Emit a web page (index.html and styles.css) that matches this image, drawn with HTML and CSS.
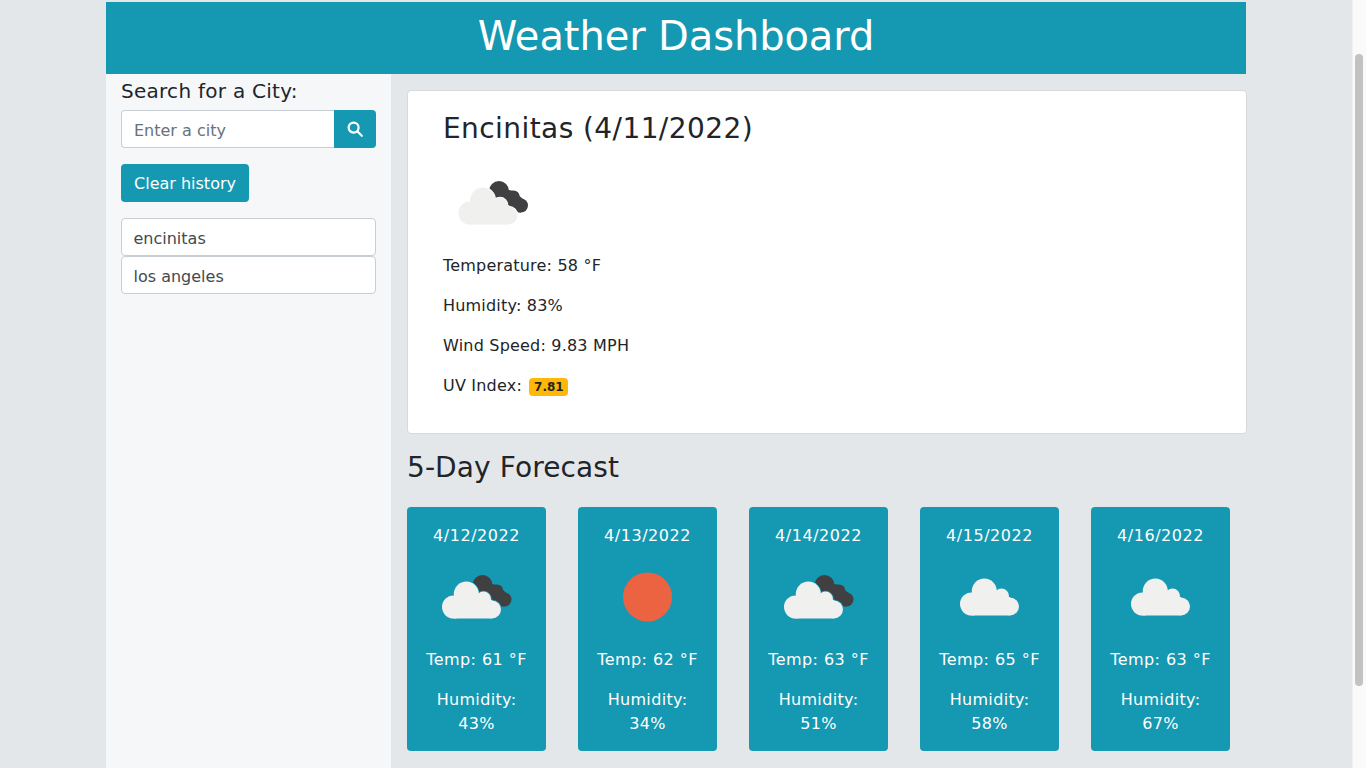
FILE: index.html
```html
<!DOCTYPE html>
<html lang="en">
<head>
<meta charset="utf-8">
<title>Weather Dashboard</title>
<link rel="stylesheet" href="styles.css">
</head>
<body>
<svg class="defs" width="0" height="0" aria-hidden="true">
  <defs>
    <g id="light-cloud">
      <circle cx="44.8" cy="44" r="12.5"/>
      <circle cx="62" cy="49" r="7.5"/>
      <circle cx="32" cy="57" r="11.5"/>
      <circle cx="70.5" cy="59.5" r="9"/>
      <rect x="32" y="50" width="38.5" height="18.5"/>
    </g>
    <g id="dark-cloud">
      <circle cx="56" cy="38" r="10"/>
      <circle cx="70.5" cy="43.7" r="6.3"/>
      <circle cx="78" cy="52.5" r="7"/>
      <polygon points="56,35 70.5,38 80,46 78,59.5 56,59.5"/>
    </g>
    <symbol id="icon-clouds" viewBox="0 0 100 100">
      <use href="#dark-cloud" class="fill-dark"/>
      <use href="#light-cloud" class="gap" transform="translate(-5 3)"/>
      <use href="#light-cloud" class="fill-light" transform="translate(-5 3)"/>
    </symbol>
    <symbol id="icon-cloud" viewBox="0 0 100 100">
      <use href="#light-cloud" class="fill-light"/>
    </symbol>
    <symbol id="icon-sun" viewBox="0 0 100 100">
      <circle cx="50" cy="50" r="24.5" class="fill-sun"/>
    </symbol>
  </defs>
</svg>
<div class="viewport">
  <div class="page">
    <div class="container">
      <header class="banner"><h1>Weather Dashboard</h1></header>
      <div class="columns">
        <aside class="sidebar">
          <h5 class="search-label">Search for a City:</h5>
          <form class="search-group">
            <input class="search-input" type="text" placeholder="Enter a city">
            <button class="search-btn" type="button" aria-label="Search">
              <svg class="search-icon" viewBox="0 0 16 16"><circle cx="6.6" cy="6.6" r="5"/><line x1="10.3" y1="10.3" x2="14.8" y2="14.8"/></svg>
            </button>
          </form>
          <button class="clear-btn" type="button">Clear history</button>
          <ul class="history">
            <li class="history-item">encinitas</li>
            <li class="history-item">los angeles</li>
          </ul>
        </aside>
        <main class="content">
          <section class="current">
            <h2 class="heading current-title">Encinitas (4/11/2022)</h2>
            <svg class="weather-icon"><use href="#icon-clouds"/></svg>
            <p class="stat">Temperature: 58 °F</p>
            <p class="stat">Humidity: 83%</p>
            <p class="stat">Wind Speed: 9.83 MPH</p>
            <p class="stat">UV Index: <span class="uv-badge">7.81</span></p>
          </section>
          <h2 class="heading forecast-title">5-Day Forecast</h2>
          <div class="forecast">
            <article class="day">
              <div class="day-date">4/12/2022</div>
              <svg class="weather-icon"><use href="#icon-clouds"/></svg>
              <p class="stat">Temp: 61 °F</p>
              <div class="day-humidity">Humidity: 43%</div>
            </article>
            <article class="day">
              <div class="day-date">4/13/2022</div>
              <svg class="weather-icon"><use href="#icon-sun"/></svg>
              <p class="stat">Temp: 62 °F</p>
              <div class="day-humidity">Humidity: 34%</div>
            </article>
            <article class="day">
              <div class="day-date">4/14/2022</div>
              <svg class="weather-icon"><use href="#icon-clouds"/></svg>
              <p class="stat">Temp: 63 °F</p>
              <div class="day-humidity">Humidity: 51%</div>
            </article>
            <article class="day">
              <div class="day-date">4/15/2022</div>
              <svg class="weather-icon"><use href="#icon-cloud"/></svg>
              <p class="stat">Temp: 65 °F</p>
              <div class="day-humidity">Humidity: 58%</div>
            </article>
            <article class="day">
              <div class="day-date">4/16/2022</div>
              <svg class="weather-icon"><use href="#icon-cloud"/></svg>
              <p class="stat">Temp: 63 °F</p>
              <div class="day-humidity">Humidity: 67%</div>
            </article>
          </div>
        </main>
      </div>
    </div>
  </div>
  <div class="scrollbar"><div class="scroll-thumb"></div></div>
</div>
</body>
</html>
```
FILE: styles.css
```css
* { box-sizing: border-box; }
html, body { margin: 0; height: 100%; overflow: hidden; }
body {
  background: #e4e7ea;
  color: #212529;
  font-family: "DejaVu Sans", Verdana, sans-serif;
  font-size: 16px;
  line-height: 24px;
}
.defs { position: absolute; }
.viewport { display: flex; height: 768px; }
.page { flex: 1; min-width: 0; overflow: hidden; padding-top: 2px; }
.container { width: 1140px; margin: 0 auto; }
.banner {
  height: 72px;
  padding-bottom: 4px;
  background: #1598b1;
  color: #fff;
  display: flex;
  align-items: center;
  justify-content: center;
}
.banner h1 { margin: 0; font-size: 40px; font-weight: 400; line-height: 48px; letter-spacing: -0.1px; }
.columns { display: flex; align-items: stretch; }
.sidebar {
  width: 285px;
  flex: none;
  height: 694px;
  background: #f6f7f9;
  padding: 5px 15px 0;
}
.search-label { margin: 0 0 7px; font-size: 20px; font-weight: 400; line-height: 24px; letter-spacing: 0.27px; }
.search-group { display: flex; height: 38px; }
.search-input {
  flex: 1;
  min-width: 0;
  border: 1px solid #c9ced4;
  border-right: 0;
  border-radius: 4px 0 0 4px;
  padding: 8px 12px 4px;
  font: inherit;
  color: #495057;
  background: #fff;
}
.search-input::placeholder { color: #68727b; opacity: 1; }
.search-btn {
  width: 42px;
  border: 0;
  padding: 0 1px 0 0;
  border-radius: 0 4px 4px 0;
  background: #1598b1;
  display: flex;
  align-items: center;
  justify-content: center;
}
.search-icon { width: 16px; height: 16px; fill: none; stroke: #fff; stroke-width: 2.2; stroke-linecap: round; }
.clear-btn {
  display: block;
  margin-top: 16px;
  width: 128px;
  height: 38px;
  padding: 2px 0 0;
  border: 0;
  border-radius: 4px;
  background: #1598b1;
  color: #fff;
  font: inherit;
}
.history { list-style: none; margin: 16px 0 0; padding: 0; }
.history-item {
  height: 38px;
  padding: 8px 11.5px 4px;
  background: #fff;
  border: 1px solid #c9ced4;
  border-radius: 4px;
  color: #43494f;
}
.content { flex: 1; min-width: 0; padding: 16px 0 0 16px; }
.current {
  width: 840px;
  height: 344px;
  padding: 21px 35px 20px;
  background: #fff;
  border: 1px solid #d7dadd;
  border-radius: 4px;
}
.heading { margin: 0 0 8px; font-size: 28px; font-weight: 400; line-height: 33.6px; }
.current-title { margin-bottom: 7px; letter-spacing: 0.42px; }
.forecast-title { margin: 17px 0 22px; letter-spacing: 0.1px; }
.weather-icon { display: block; width: 100px; height: 100px; margin-bottom: 1px; color: #fff; }
.stat { margin: 0 0 16px; letter-spacing: 0.2px; }
.uv-badge {
  display: inline-block;
  margin-left: 2px;
  padding: 3px 4.8px;
  background: #ffb806;
  border-radius: 4px;
  font-size: 12px;
  font-weight: 700;
  line-height: 12px;
  letter-spacing: 0;
  vertical-align: baseline;
}
.forecast { display: flex; gap: 32px; }
.day {
  width: 139px;
  height: 244px;
  padding: 17px 16px 16px;
  background: #1598b1;
  border-radius: 4px;
  color: #fff;
  text-align: center;
}
.day .weather-icon { margin: -0.5px auto 0.5px; color: #1598b1; }
.day .weather-icon use { transform: translateX(-0.5px); }
.day .stat { letter-spacing: 0.45px; }
.day-date { letter-spacing: 0.55px; }
.day-humidity { letter-spacing: 0.33px; }
.fill-light { fill: #f0f0ef; }
.fill-dark { fill: #404042; }
.fill-sun { fill: #ec6342; }
.gap { fill: currentColor; stroke: currentColor; stroke-width: 1.5; }
.scrollbar {
  width: 14px;
  flex: none;
  padding: 54px 3px 82px;
  background: #fafafa;
  border-left: 1px solid #f0f0f0;
}
.scroll-thumb { height: 100%; margin-left: -1px; width: 8px; background: #c2c2c2; border-radius: 4px; }
```
